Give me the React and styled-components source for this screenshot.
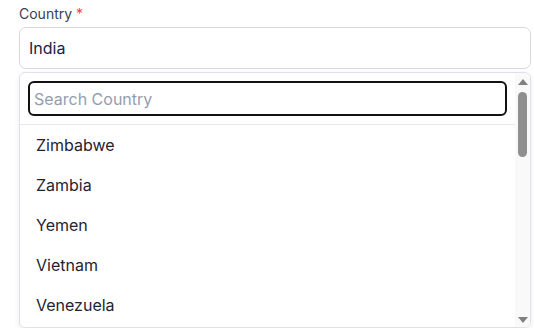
import styled, { createGlobalStyle } from 'styled-components';

const GlobalStyle = createGlobalStyle`
  html, body {
    margin: 0;
    padding: 0;
    background: #ffffff;
    font-family: Inter, "Noto Sans", sans-serif;
  }
`;

const Field = styled.div`
  display: flex;
  flex-direction: column;
  padding: 4px 3px 0 19px;
`;

const Label = styled.label`
  font-size: 14px;
  line-height: 20px;
  color: #374151;
  margin-bottom: 3px;
`;

const Required = styled.span`
  color: #ef4444;
`;

const Trigger = styled.div`
  height: 40px;
  display: flex;
  align-items: center;
  padding: 0 9px;
  border: 1px solid #d4d7dd;
  border-radius: 7px;
  font-size: 16px;
  color: #13234a;
`;

const Panel = styled.div`
  margin-top: 3px;
  height: 254px;
  display: flex;
  border: 1px solid #dfe2e7;
  border-radius: 6px;
  box-shadow: 0 2px 6px rgba(15, 23, 42, 0.08);
  overflow: hidden;
  background: #ffffff;
`;

const List = styled.div`
  flex: 1;
  min-width: 0;
  overflow: hidden;
`;

const SearchBar = styled.div`
  padding: 8px;
  border-bottom: 1px solid #e5e7eb;
`;

const SearchInput = styled.input`
  box-sizing: border-box;
  width: 100%;
  height: 35px;
  padding: 0 4px;
  border: 2px solid #111111;
  border-radius: 6px;
  outline: none;
  font-family: Inter, "Noto Sans", sans-serif;
  font-size: 16px;
  color: #1f2937;

  &::placeholder {
    color: #949db0;
  }
`;

const Option = styled.div`
  height: 40px;
  display: flex;
  align-items: center;
  padding-left: 16px;
  font-size: 16px;
  color: #1f2433;
`;

const Scrollbar = styled.div`
  width: 15px;
  flex-shrink: 0;
  display: flex;
  flex-direction: column;
  background: #f9f9f9;
`;

const ScrollButton = styled.div`
  height: 15px;
  display: flex;
  justify-content: center;
  align-items: ${(p) => (p.$down ? 'flex-start' : 'flex-end')};
  padding: ${(p) => (p.$down ? '5px 0 0' : '0 0 3px')};
  box-sizing: border-box;
`;

const Track = styled.div`
  flex: 1;
  padding: 4px 3px;
`;

const Thumb = styled.div`
  height: 65px;
  border-radius: 5px;
  background: #8f8f8f;
`;

const Arrow = ({ down }) => (
  <svg width="10" height="6" viewBox="0 0 10 6">
    <polygon points={down ? '0,0 10,0 5,6' : '0,6 10,6 5,0'} fill="#808080" />
  </svg>
);

const countries = ['Zimbabwe', 'Zambia', 'Yemen', 'Vietnam', 'Venezuela'];

export default function App() {
  return (
    <>
      <GlobalStyle />
      <Field>
        <Label>
          Country <Required>*</Required>
        </Label>
        <Trigger>India</Trigger>
        <Panel>
          <List>
            <SearchBar>
              <SearchInput placeholder="Search Country" />
            </SearchBar>
            {countries.map((name) => (
              <Option key={name}>{name}</Option>
            ))}
          </List>
          <Scrollbar>
            <ScrollButton>
              <Arrow />
            </ScrollButton>
            <Track>
              <Thumb />
            </Track>
            <ScrollButton $down>
              <Arrow down />
            </ScrollButton>
          </Scrollbar>
        </Panel>
      </Field>
    </>
  );
}
